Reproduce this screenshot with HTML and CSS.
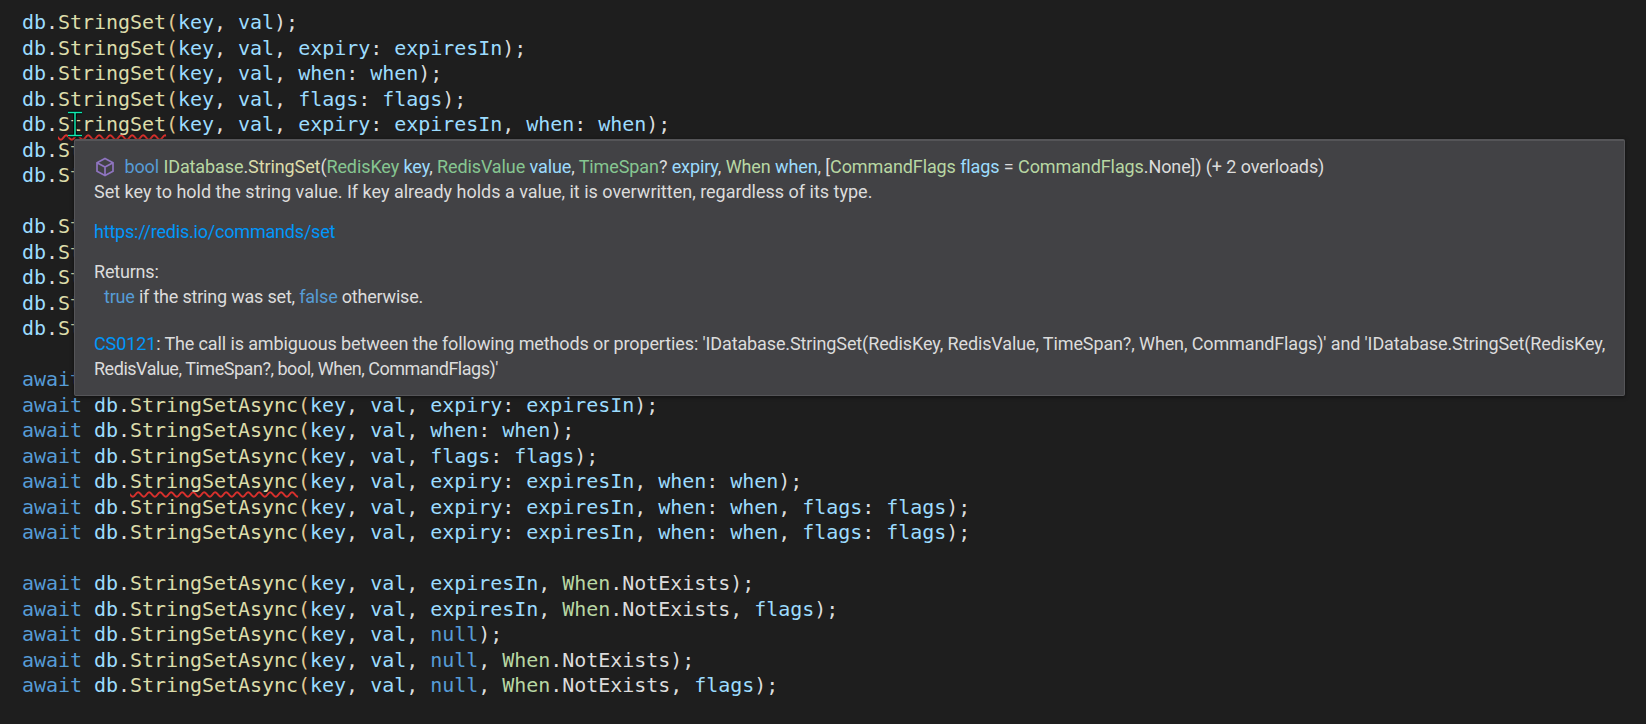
FILE: index.html
```html
<html>
    <head>
        <link rel="stylesheet" href="styles.css">
    </head>
    <body>
        <div class="editor">
            <div class="line"><span class="var">db</span>.<span class="fn">StringSet</span><span class="par">(</span><span class="var">key</span>, <span class="var">val</span>);</div>
            <div class="line"><span class="var">db</span>.<span class="fn">StringSet</span><span class="par">(</span><span class="var">key</span>, <span class="var">val</span>, <span class="var">expiry</span>: <span class="var">expiresIn</span>);</div>
            <div class="line"><span class="var">db</span>.<span class="fn">StringSet</span><span class="par">(</span><span class="var">key</span>, <span class="var">val</span>, <span class="var">when</span>: <span class="var">when</span>);</div>
            <div class="line"><span class="var">db</span>.<span class="fn">StringSet</span><span class="par">(</span><span class="var">key</span>, <span class="var">val</span>, <span class="var">flags</span>: <span class="var">flags</span>);</div>
            <div class="line"><span class="var">db</span>.<span class="fn squiggle">StringSet</span><span class="par">(</span><span class="var">key</span>, <span class="var">val</span>, <span class="var">expiry</span>: <span class="var">expiresIn</span>, <span class="var">when</span>: <span class="var">when</span>);</div>
            <div class="line"><span class="var">db</span>.<span class="fn">StringSet</span><span class="par">(</span><span class="var">key</span>, <span class="var">val</span>, <span class="var">expiry</span>: <span class="var">expiresIn</span>, <span class="var">when</span>: <span class="var">when</span>, <span class="var">flags</span>: <span class="var">flags</span>);</div>
            <div class="line"><span class="var">db</span>.<span class="fn">StringSet</span><span class="par">(</span><span class="var">key</span>, <span class="var">val</span>, <span class="var">expiry</span>: <span class="var">expiresIn</span>, <span class="var">when</span>: <span class="var">when</span>, <span class="var">flags</span>: <span class="var">flags</span>);</div>
            <div class="line">&nbsp;</div>
            <div class="line"><span class="var">db</span>.<span class="fn">StringSet</span><span class="par">(</span><span class="var">key</span>, <span class="var">val</span>, <span class="var">expiresIn</span>, <span class="enum">When</span>.<span class="mem">NotExists</span>);</div>
            <div class="line"><span class="var">db</span>.<span class="fn">StringSet</span><span class="par">(</span><span class="var">key</span>, <span class="var">val</span>, <span class="var">expiresIn</span>, <span class="enum">When</span>.<span class="mem">NotExists</span>, <span class="var">flags</span>);</div>
            <div class="line"><span class="var">db</span>.<span class="fn">StringSet</span><span class="par">(</span><span class="var">key</span>, <span class="var">val</span>, <span class="kw">null</span>);</div>
            <div class="line"><span class="var">db</span>.<span class="fn">StringSet</span><span class="par">(</span><span class="var">key</span>, <span class="var">val</span>, <span class="kw">null</span>, <span class="enum">When</span>.<span class="mem">NotExists</span>);</div>
            <div class="line"><span class="var">db</span>.<span class="fn">StringSet</span><span class="par">(</span><span class="var">key</span>, <span class="var">val</span>, <span class="kw">null</span>, <span class="enum">When</span>.<span class="mem">NotExists</span>, <span class="var">flags</span>);</div>
            <div class="line">&nbsp;</div>
            <div class="line"><span class="kw">await</span> <span class="var">db</span>.<span class="fn">StringSetAsync</span><span class="par">(</span><span class="var">key</span>, <span class="var">val</span>);</div>
            <div class="line"><span class="kw">await</span> <span class="var">db</span>.<span class="fn">StringSetAsync</span><span class="par">(</span><span class="var">key</span>, <span class="var">val</span>, <span class="var">expiry</span>: <span class="var">expiresIn</span>);</div>
            <div class="line"><span class="kw">await</span> <span class="var">db</span>.<span class="fn">StringSetAsync</span><span class="par">(</span><span class="var">key</span>, <span class="var">val</span>, <span class="var">when</span>: <span class="var">when</span>);</div>
            <div class="line"><span class="kw">await</span> <span class="var">db</span>.<span class="fn">StringSetAsync</span><span class="par">(</span><span class="var">key</span>, <span class="var">val</span>, <span class="var">flags</span>: <span class="var">flags</span>);</div>
            <div class="line"><span class="kw">await</span> <span class="var">db</span>.<span class="fn squiggle">StringSetAsync</span><span class="par">(</span><span class="var">key</span>, <span class="var">val</span>, <span class="var">expiry</span>: <span class="var">expiresIn</span>, <span class="var">when</span>: <span class="var">when</span>);</div>
            <div class="line"><span class="kw">await</span> <span class="var">db</span>.<span class="fn">StringSetAsync</span><span class="par">(</span><span class="var">key</span>, <span class="var">val</span>, <span class="var">expiry</span>: <span class="var">expiresIn</span>, <span class="var">when</span>: <span class="var">when</span>, <span class="var">flags</span>: <span class="var">flags</span>);</div>
            <div class="line"><span class="kw">await</span> <span class="var">db</span>.<span class="fn">StringSetAsync</span><span class="par">(</span><span class="var">key</span>, <span class="var">val</span>, <span class="var">expiry</span>: <span class="var">expiresIn</span>, <span class="var">when</span>: <span class="var">when</span>, <span class="var">flags</span>: <span class="var">flags</span>);</div>
            <div class="line">&nbsp;</div>
            <div class="line"><span class="kw">await</span> <span class="var">db</span>.<span class="fn">StringSetAsync</span><span class="par">(</span><span class="var">key</span>, <span class="var">val</span>, <span class="var">expiresIn</span>, <span class="enum">When</span>.<span class="mem">NotExists</span>);</div>
            <div class="line"><span class="kw">await</span> <span class="var">db</span>.<span class="fn">StringSetAsync</span><span class="par">(</span><span class="var">key</span>, <span class="var">val</span>, <span class="var">expiresIn</span>, <span class="enum">When</span>.<span class="mem">NotExists</span>, <span class="var">flags</span>);</div>
            <div class="line"><span class="kw">await</span> <span class="var">db</span>.<span class="fn">StringSetAsync</span><span class="par">(</span><span class="var">key</span>, <span class="var">val</span>, <span class="kw">null</span>);</div>
            <div class="line"><span class="kw">await</span> <span class="var">db</span>.<span class="fn">StringSetAsync</span><span class="par">(</span><span class="var">key</span>, <span class="var">val</span>, <span class="kw">null</span>, <span class="enum">When</span>.<span class="mem">NotExists</span>);</div>
            <div class="line"><span class="kw">await</span> <span class="var">db</span>.<span class="fn">StringSetAsync</span><span class="par">(</span><span class="var">key</span>, <span class="var">val</span>, <span class="kw">null</span>, <span class="enum">When</span>.<span class="mem">NotExists</span>, <span class="var">flags</span>);</div>
        </div>

        <svg class="ibeam" width="20" height="28" viewBox="0 0 20 28">
            <path class="ibeam-edge" d="M3 2.500h14M10 2.500v23M3 25.500h14"/>
            <path class="ibeam-core" d="M3 2.500h14M10 2.500v23M3 25.500h14"/>
        </svg>

        <div class="tooltip">
            <div class="block sig">
                <svg class="cube" width="20" height="20" viewBox="0 0 20 20">
                    <path d="M10 1.500l8 4.200v8.600l-8 4.200-8-4.200V5.700zM2 5.700l8 4.300 8-4.300M10 10v8.500"/>
                </svg>
                <span class="kw">bool</span> <span class="enum">IDatabase</span>.<span class="fn">StringSet</span>(<span class="type">RedisKey</span> <span class="var">key</span>, <span class="type">RedisValue</span> <span class="var">value</span>, <span class="type">TimeSpan</span>? <span class="var">expiry</span>, <span class="enum">When</span> <span class="var">when</span>, [<span class="enum">CommandFlags</span> <span class="var">flags</span> = <span class="enum">CommandFlags</span>.None]) (+ 2 overloads)
                <div class="summary">Set key to hold the string value. If key already holds a value, it is overwritten, regardless of its type.</div>
            </div>
            <div class="block tight"><a class="link" href="#">https://redis.io/commands/set</a></div>
            <div class="block tight">
                <div>Returns:</div>
                <div class="indent"><span class="kw">true</span> if the string was set, <span class="kw">false</span> otherwise.</div>
            </div>
            <div class="block error">
                <a class="link" href="#">CS0121</a>: The call is ambiguous between the following methods or properties: 'IDatabase.StringSet(RedisKey, RedisValue, TimeSpan?, When, CommandFlags)' and 'IDatabase.StringSet(RedisKey, <span class="error-tail">RedisValue, TimeSpan?, bool, When, CommandFlags)'</span>
            </div>
        </div>
    </body>
</html>
```

FILE: styles.css
```css
html, body {
    margin: 0;
    height: 100%;
    overflow: hidden;
    background: #1e1e1e;
    color: #dcdcdc;
}
.editor {
    font-family: "DejaVu Sans Mono", monospace;
    font-size: 20px;
    letter-spacing: -0.04px;
    line-height: 25.5px;
    padding: 10px 0 0 22px;
}
.line {
    white-space: pre;
}
.var { color: #9cdcfe; }
.fn { color: #dcdcaa; }
.kw { color: #569cd6; }
.enum { color: #b8d7a3; }
.type { color: #86c691; }
.mem { color: #dcdcdc; }
.par { color: #e0c890; }
.squiggle {
    text-decoration: underline wavy #d8302c 1.5px;
    text-decoration-skip-ink: none;
    text-underline-offset: 3px;
}
.ibeam {
    position: absolute;
    left: 65px;
    top: 110px;
}
.ibeam path {
    fill: none;
}
.ibeam-edge {
    stroke: #000;
    stroke-width: 3.5;
}
.ibeam-core {
    stroke: #10e8b0;
    stroke-width: 1.5;
}
.tooltip {
    position: absolute;
    left: 74px;
    top: 139px;
    width: 1520px;
    padding: 13px 10px 14px 19px;
    background: #424245;
    border: 1px solid #555558;
    border-top-width: 2px;
    border-radius: 2px;
    box-shadow: 0 1px 4px rgba(0, 0, 0, 0.5);
    font-family: Roboto, sans-serif;
    font-size: 18px;
    line-height: 25px;
    color: #dcdcdc;
}
.block {
    margin-bottom: 15px;
}
.sig {
    letter-spacing: -0.1px;
}
.summary {
    letter-spacing: 0;
}
.tight {
    letter-spacing: -0.2px;
}
.block.error {
    margin-top: 22px;
    margin-bottom: 0;
    letter-spacing: -0.12px;
}
.block .error-tail {
    letter-spacing: -0.47px;
}
.cube {
    vertical-align: -4px;
    margin: 0 5px 0 1px;
}
.cube path {
    fill: none;
    stroke: #8f74c0;
    stroke-width: 1.7;
}
.link {
    color: #0097fb;
    text-decoration: none;
}
.indent {
    padding-left: 10px;
}
```
